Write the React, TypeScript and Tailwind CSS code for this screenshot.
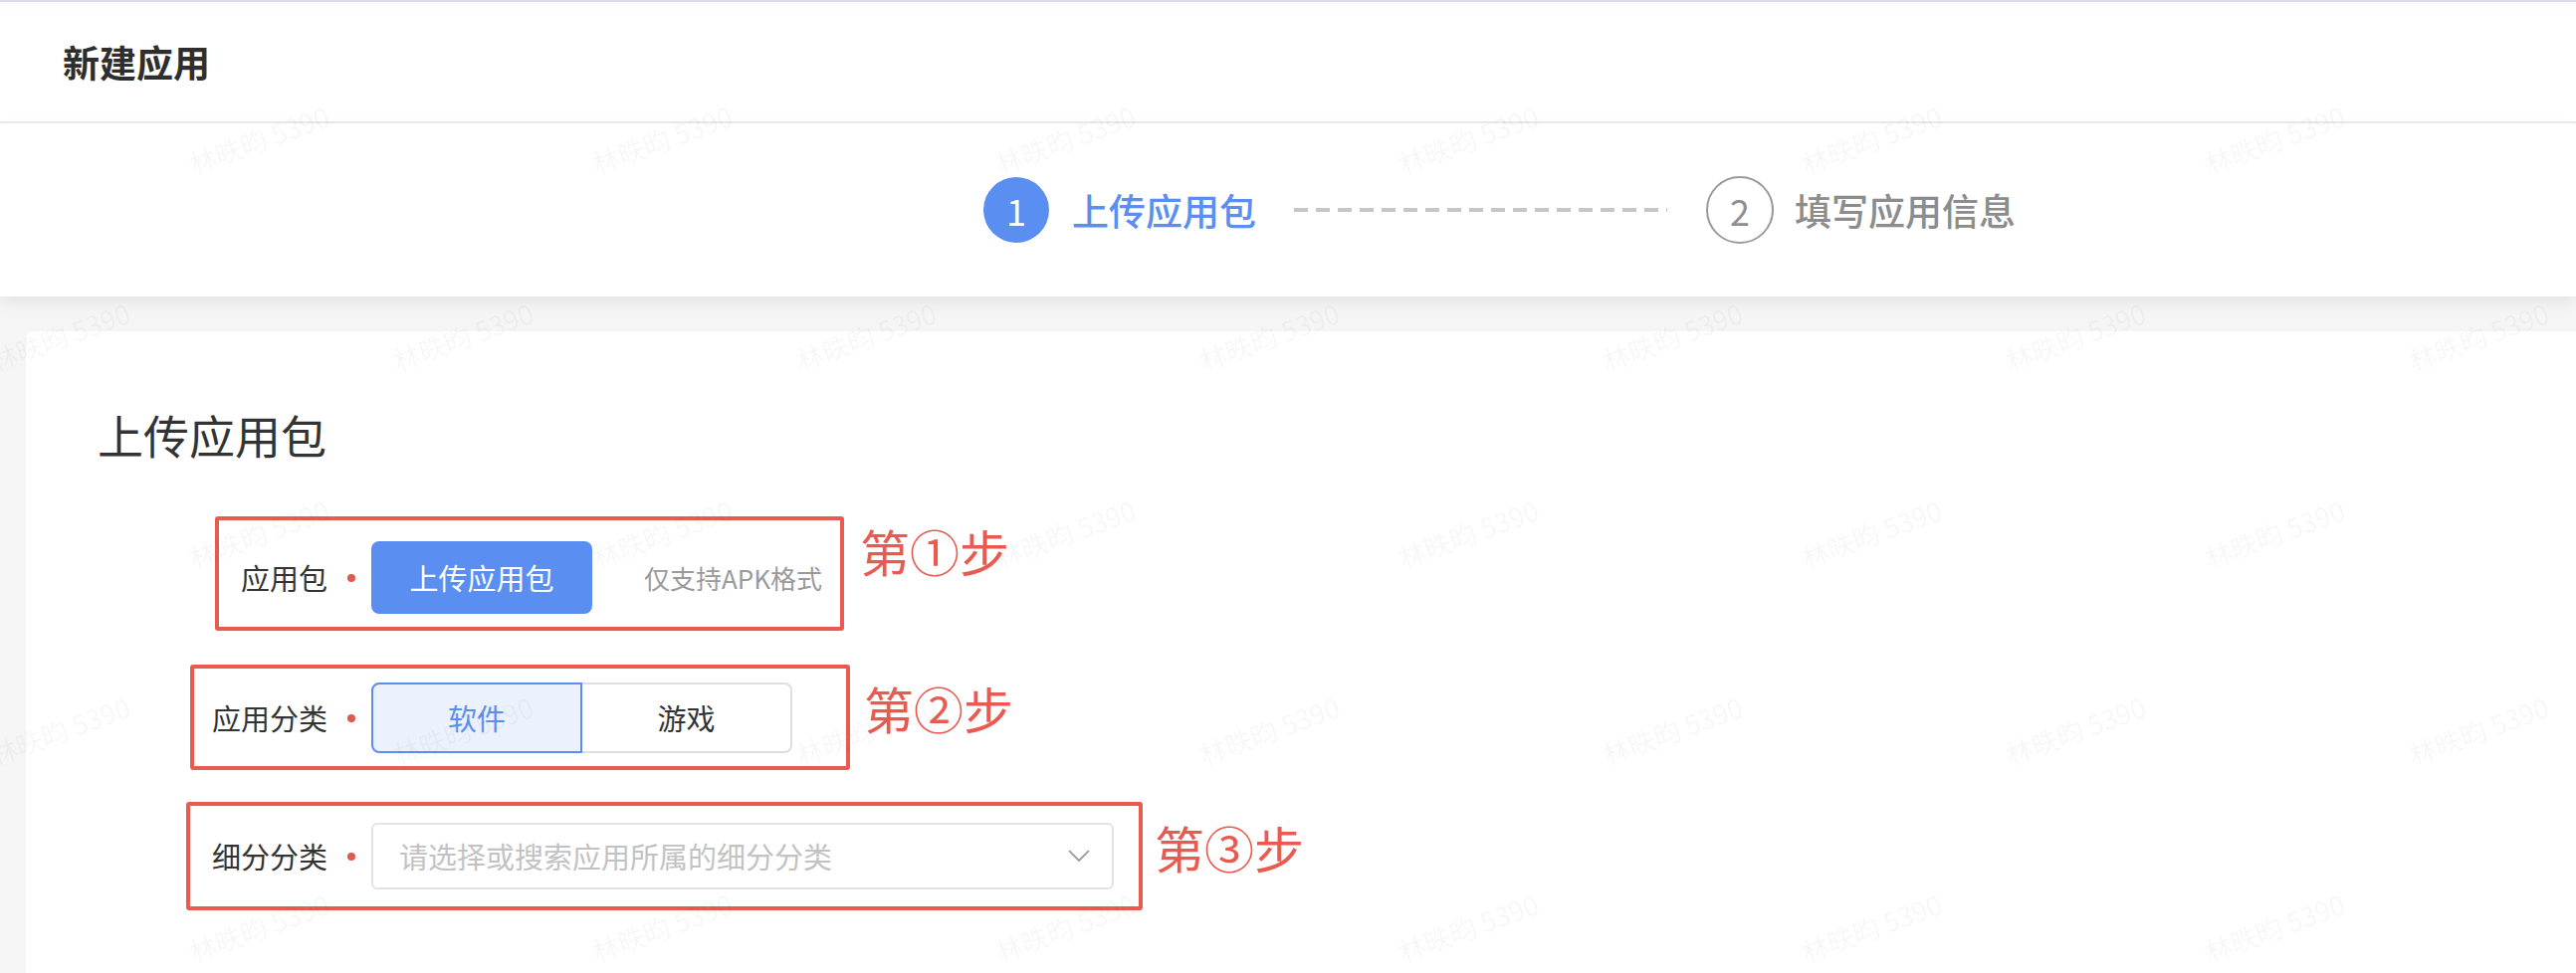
import React from "react";

const FONT = "font-['PingFang_SC','Noto_Sans_CJK_SC','Noto_Sans',sans-serif]";

function Watermarks() {
  const items: { x: number; y: number; key: string }[] = [];
  for (let r = 0; r < 5; r++) {
    const y = 140 + 198 * r;
    const off = r % 2 === 0 ? 260 : 60;
    for (let k = 0; k < 7; k++) {
      items.push({ x: off + 405 * k, y, key: `${r}-${k}` });
    }
  }
  return (
    <div className="pointer-events-none absolute inset-0 z-20 overflow-hidden">
      {items.map((it) => (
        <span
          key={it.key}
          className="absolute -translate-x-1/2 -translate-y-1/2 -rotate-[20deg] whitespace-nowrap text-[27px] leading-none text-[rgba(0,0,0,0.045)]"
          style={{ left: it.x, top: it.y }}
        >
          林昳昀 5390
        </span>
      ))}
    </div>
  );
}

function Dot() {
  return <span className="ml-[20px] h-[8px] w-[8px] shrink-0 rounded-full bg-[#e0584f]" />;
}

export default function App() {
  return (
    <div className={`relative flex h-[978px] w-[2588px] flex-col overflow-hidden bg-[#f5f5f5] ${FONT}`}>
      {/* header */}
      <div className="flex h-[124px] shrink-0 items-center border-t-2 border-b-2 border-t-[#d9dce4] border-b-[#e9e9ee] bg-white pl-[63px] shadow-[inset_0_10px_12px_-8px_rgba(0,0,0,0.035)]">
        <span className="text-[37px] font-bold leading-none text-[#2e2e2e]">新建应用</span>
      </div>

      {/* steps */}
      <div className="relative z-[1] flex h-[174px] shrink-0 items-center bg-white pl-[988px] shadow-[0_6px_14px_rgba(0,0,0,0.07)]">
        <div className="flex h-[66px] w-[66px] items-center justify-center rounded-full bg-[#5a8ef0] text-[36px] leading-none text-white">
          1
        </div>
        <span className="ml-[23px] text-[37px] font-medium leading-none text-[#5a8ef0]">上传应用包</span>
        <div className="ml-[38px] h-[4px] w-[375px] bg-[repeating-linear-gradient(90deg,#c6c6c6_0px,#c6c6c6_14px,transparent_14px,transparent_22px)]" />
        <div className="ml-[39px] flex h-[68px] w-[68px] items-center justify-center rounded-full border-2 border-[#9a9a9a] bg-white text-[36px] leading-none text-[#8f8f8f]">
          2
        </div>
        <span className="ml-[21px] text-[37px] font-medium leading-none text-[#8c8c8c]">填写应用信息</span>
      </div>

      {/* card */}
      <div className="ml-[26px] mt-[35px] flex-1 rounded-tl-[8px] bg-white pt-[80px]">
        <div className="pl-[72px] text-[46px] leading-[46px] text-[#333]">上传应用包</div>

        {/* row 1 */}
        <div className="ml-[190px] mt-[60px] flex items-start">
          <div className="flex items-center rounded-[3px] border-[4px] border-[#eb5a50] pb-[13px] pr-[18px] pt-[21px]">
            <span className="w-[109px] text-right text-[29px] leading-none text-[#333]">应用包</span>
            <Dot />
            <div className="ml-[16px] flex h-[73px] w-[222px] items-center justify-center rounded-[8px] bg-[#5a8ef0] text-[29px] leading-none text-white">
              上传应用包
            </div>
            <span className="ml-[52px] text-[26px] leading-none text-[#9a9a9a]">仅支持APK格式</span>
          </div>
          <span className="ml-[16px] mt-[9px] text-[50px] leading-[50px] text-[#e95a50]">第①步</span>
        </div>

        {/* row 2 */}
        <div className="ml-[165px] mt-[34px] flex items-start">
          <div className="flex items-center rounded-[3px] border-[4px] border-[#eb5a50] pb-[13px] pr-[54px] pt-[14px]">
            <span className="w-[134px] text-right text-[29px] leading-none text-[#333]">应用分类</span>
            <Dot />
            <div className="ml-[16px] flex h-[71px]">
              <div className="flex w-[212px] items-center justify-center rounded-l-[8px] border-2 border-[#5a8ef0] bg-[#ebf2fd] text-[29px] leading-none text-[#5a8ef0]">
                软件
              </div>
              <div className="flex w-[211px] items-center justify-center rounded-r-[8px] border-2 border-l-0 border-[#dedede] bg-white text-[29px] leading-none text-[#333]">
                游戏
              </div>
            </div>
          </div>
          <span className="ml-[14px] mt-[18px] text-[50px] leading-[50px] text-[#e95a50]">第②步</span>
        </div>

        {/* row 3 */}
        <div className="ml-[161px] mt-[32px] flex items-start">
          <div className="flex items-center rounded-[3px] border-[4px] border-[#eb5a50] pb-[17px] pr-[25px] pt-[17px]">
            <span className="w-[138px] text-right text-[29px] leading-none text-[#333]">细分分类</span>
            <Dot />
            <div className="ml-[16px] flex h-[67px] w-[746px] items-center justify-between rounded-[6px] border-2 border-[#e3e3e3] bg-white pl-[26px] pr-[22px]">
              <span className="text-[29px] leading-none text-[#c2c2c2]">请选择或搜索应用所属的细分分类</span>
              <svg width="22" height="13" viewBox="0 0 22 13" fill="none">
                <polyline points="1,1 11,11 21,1" stroke="#a3a3a3" strokeWidth="2" />
              </svg>
            </div>
          </div>
          <span className="ml-[12px] mt-[20px] text-[50px] leading-[50px] text-[#e95a50]">第③步</span>
        </div>
      </div>

      <Watermarks />
    </div>
  );
}
